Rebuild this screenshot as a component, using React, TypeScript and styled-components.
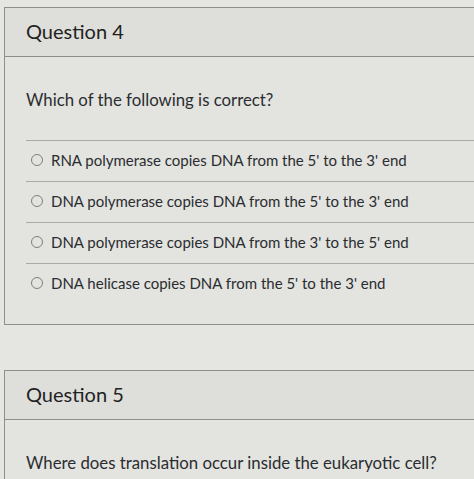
import styled, { createGlobalStyle } from 'styled-components'

const GlobalStyle = createGlobalStyle`
    html, body {
        margin: 0;
        padding: 0;
        background: #e5e5e1;
        overflow: hidden;
    }
    body {
        font-family: Lato, "Noto Sans", sans-serif;
        color: #2a2d30;
    }
`

const Page = styled.div`
    display: flex;
    flex-direction: column;
    gap: 45px;
    padding: 7px 0 0 4px;
    width: 500px;
`

const Card = styled.section`
    border: 1px solid #8e8f8c;
    border-right: none;
    background: #e3e3df;
`

const Header = styled.div`
    height: 48px;
    display: flex;
    align-items: center;
    padding-left: 21px;
    border-bottom: 1px solid #8e8f8c;
    background: #dededa;
`

const Title = styled.h2`
    margin: 0;
    font-size: 20px;
    font-weight: 400;
    color: #1f2224;
    padding-bottom: 2px;
`

const Body = styled.div`
    padding: 33px 0 20px 21px;
`

const Prompt = styled.p`
    margin: 0 0 30px;
    font-size: 16.8px;
    line-height: 20px;
    color: #2a2d30;
`

const Answers = styled.ul`
    list-style: none;
    margin: 0;
    padding: 0;
`

const Answer = styled.li`
    height: 37px;
    padding-bottom: 3px;
    display: flex;
    align-items: center;
    border-top: 1px solid #a9aaa6;
    font-size: 15px;
    color: #2a2d30;
`

const Radio = styled.span`
    width: 10px;
    height: 10px;
    border: 1.3px solid #7d7f7f;
    border-radius: 50%;
    margin: 0 8px 0 5px;
    flex-shrink: 0;
`

const answers = [
    "RNA polymerase copies DNA from the 5' to the 3' end",
    "DNA polymerase copies DNA from the 5' to the 3' end",
    "DNA polymerase copies DNA from the 3' to the 5' end",
    "DNA helicase copies DNA from the 5' to the 3' end",
]

const App = () => {
    return (
        <>
            <GlobalStyle />
            <Page>
                <Card>
                    <Header>
                        <Title>Question 4</Title>
                    </Header>
                    <Body>
                        <Prompt>Which of the following is correct?</Prompt>
                        <Answers>
                            {answers.map(a => (
                                <Answer key={a}>
                                    <Radio />
                                    {a}
                                </Answer>
                            ))}
                        </Answers>
                    </Body>
                </Card>
                <Card>
                    <Header>
                        <Title>Question 5</Title>
                    </Header>
                    <Body>
                        <Prompt>Where does translation occur inside the eukaryotic cell?</Prompt>
                    </Body>
                </Card>
            </Page>
        </>
    )
}

export default App
